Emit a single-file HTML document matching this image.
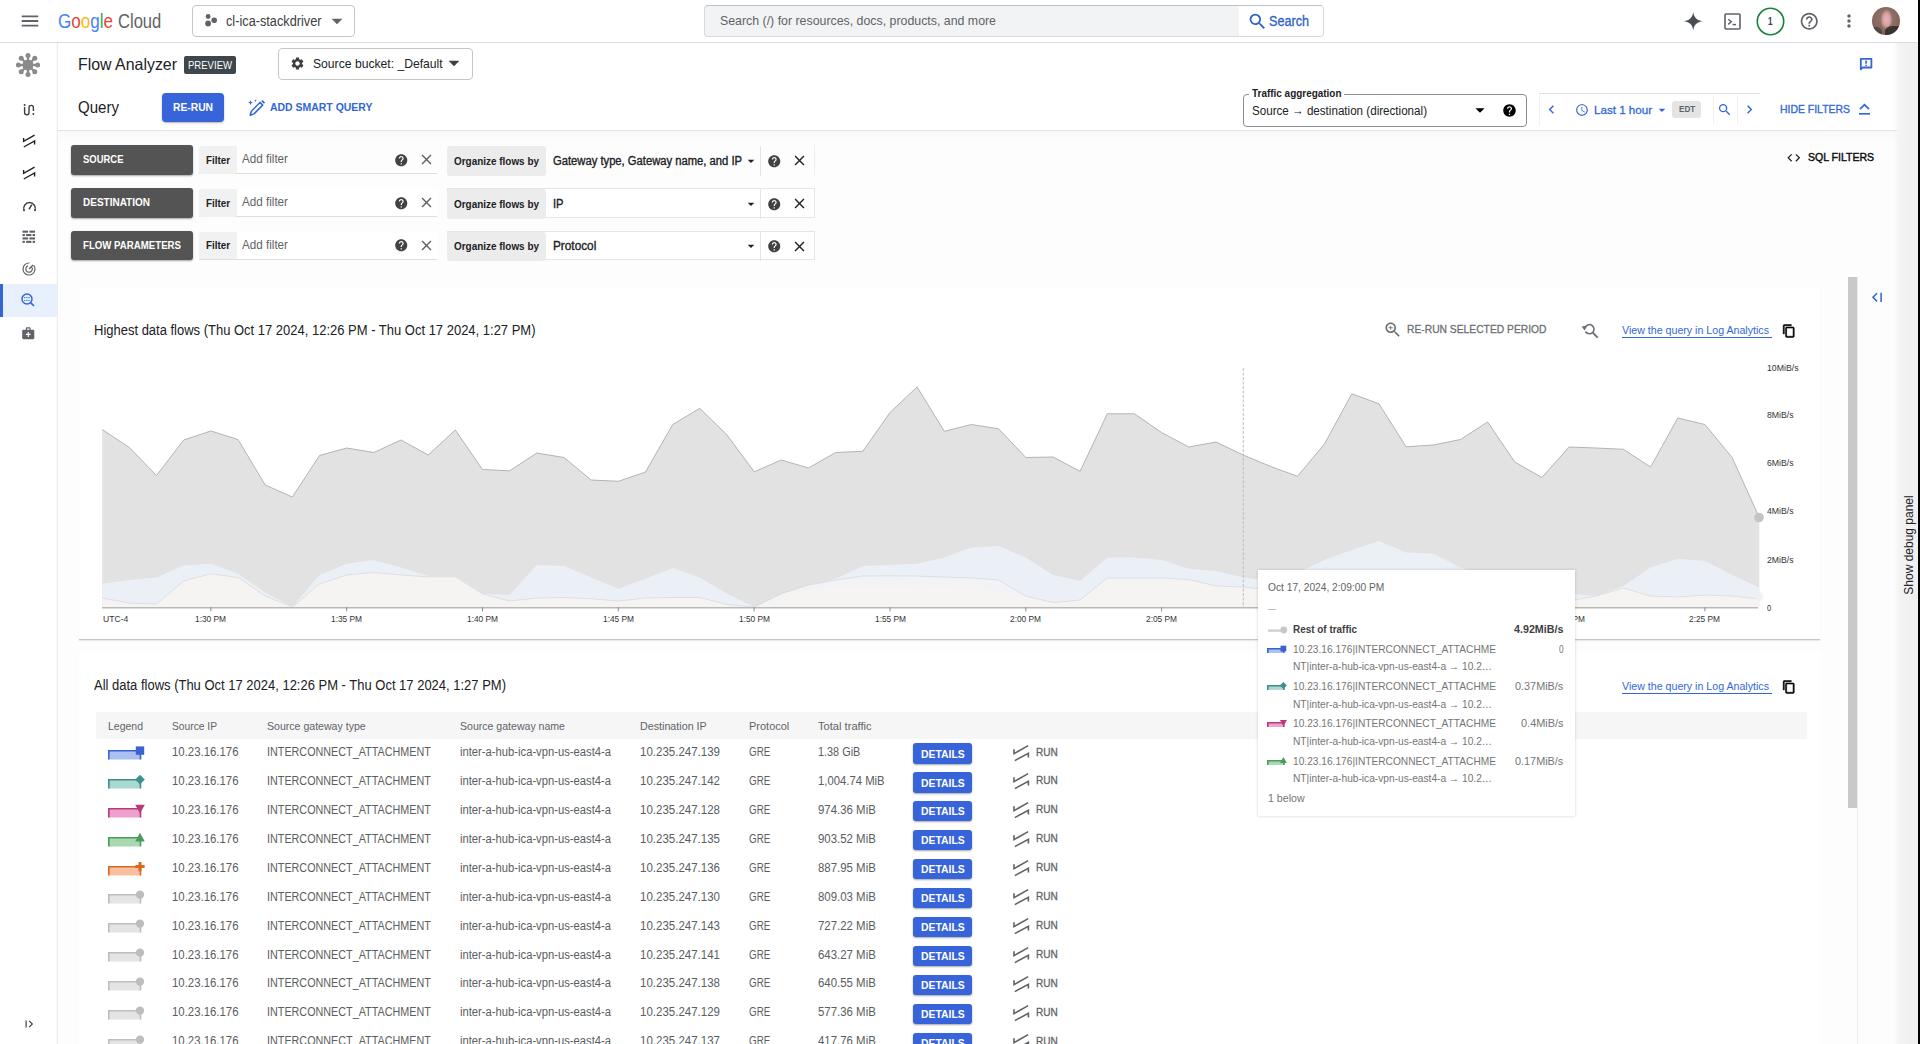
<!DOCTYPE html><html><head><meta charset="utf-8"><title>Flow Analyzer</title><style>
html,body{margin:0;padding:0;background:#fff;}body{width:1920px;height:1044px;overflow:hidden;position:relative;font-family:"Liberation Sans",sans-serif;}
#r div,#r svg,#r span{position:absolute;}#r{position:absolute;left:0;top:0;width:1920px;height:1044px;overflow:hidden;}
#r span.t{white-space:nowrap;transform-origin:0 50%;display:block;}#r span.t span{position:static;}
</style></head><body><div id="r">
<div style="left:0px;top:0px;width:1918px;height:42px;background:#fff;"></div>
<div style="left:0px;top:42px;width:1917px;height:1px;background:#dadce0;"></div>
<svg style="left:19.0px;top:10.0px;" width="22" height="22" viewBox="0 0 24 24"><path d="M3 18h18v-2H3v2zm0-5h18v-2H3v2zm0-7v2h18V6H3z" fill="#5f6368"/></svg>
<div style="left:192px;top:5px;width:162.5px;height:31.5px;border:1px solid #c4c7c5;border-radius:4px;box-sizing:border-box;background:#fff;"></div>
<svg style="left:203px;top:13px;" width="16" height="16" viewBox="0 0 16 16"><circle cx="5.1" cy="3.5" r="2.4" fill="#5f6368"/><circle cx="5.1" cy="10.5" r="2.9" fill="#5f6368"/><circle cx="11.2" cy="7.3" r="2.8" fill="#5f6368"/></svg>
<svg style="left:323.5px;top:7.8px;" width="26" height="26" viewBox="0 0 24 24"><path d="M7 10l5 5 5-5z" fill="#5f6368"/></svg>
<div style="left:704px;top:5px;width:620px;height:31.5px;border:1px solid #d5d8dc;border-top-color:#bfc2c6;border-radius:4px;box-sizing:border-box;background:#f1f3f4;"></div>
<div style="left:1239px;top:6px;width:84px;height:30px;background:#fff;border-radius:0 3px 3px 0;"></div>
<svg style="left:1246.5px;top:10.5px;" width="21" height="21" viewBox="0 0 24 24"><path d="M15.5 14h-.79l-.28-.27A6.471 6.471 0 0 0 16 9.5 6.5 6.5 0 1 0 9.5 16c1.61 0 3.09-.59 4.23-1.57l.27.28v.79l5 4.99L20.49 19l-4.99-5zm-6 0C7.01 14 5 11.99 5 9.5S7.01 5 9.5 5 14 7.01 14 9.5 11.99 14 9.5 14z" fill="#2b63c7"/></svg>
<svg style="left:1682.55px;top:10.95px;" width="20.5" height="20.5" viewBox="0 0 24 24"><path d="M12 1C12.6 7.6 16.4 11.4 23 12 16.4 12.6 12.6 16.4 12 23 11.4 16.4 7.6 12.6 1 12 7.6 11.4 11.4 7.6 12 1z" fill="#4a4d51"/></svg>
<svg style="left:1723.5px;top:12.7px;" width="17" height="17" viewBox="0 0 17 17"><rect x="1" y="1" width="15" height="15" rx="1" fill="none" stroke="#5f6368" stroke-width="1.6"/><path d="M4.2 6.2l3 2.6-3 2.6" fill="none" stroke="#5f6368" stroke-width="1.5"/><path d="M8.6 11.6h3.4" stroke="#5f6368" stroke-width="1.5"/></svg>
<svg style="left:1756px;top:6.5px;" width="29" height="29" viewBox="0 0 29 29"><circle cx="14.5" cy="14.5" r="13.2" fill="#fff" stroke="#188038" stroke-width="1.6"/></svg>
<svg style="left:1799.35px;top:10.75px;" width="20.5" height="20.5" viewBox="0 0 24 24"><path d="M11 18h2v-2h-2v2zm1-16C6.48 2 2 6.48 2 12s4.48 10 10 10 10-4.48 10-10S17.52 2 12 2zm0 18c-4.41 0-8-3.59-8-8s3.59-8 8-8 8 3.59 8 8-3.59 8-8 8zm0-14c-2.21 0-4 1.79-4 4h2c0-1.1.9-2 2-2s2 .9 2 2c0 2-3 1.75-3 5h2c0-2.25 3-2.5 3-5 0-2.21-1.79-4-4-4z" fill="#5f6368"/></svg>
<svg style="left:1838.8px;top:11.0px;" width="20" height="20" viewBox="0 0 24 24"><path d="M12 8c1.1 0 2-.9 2-2s-.9-2-2-2-2 .9-2 2 .9 2 2 2zm0 2c-1.1 0-2 .9-2 2s.9 2 2 2 2-.9 2-2-.9-2-2-2zm0 6c-1.1 0-2 .9-2 2s.9 2 2 2 2-.9 2-2-.9-2-2-2z" fill="#5f6368"/></svg>
<div style="left:1872px;top:6.7px;width:28px;height:28px;border-radius:50%;background:radial-gradient(ellipse 22% 38% at 52% 45%,#e6b4b4 0,#d9a3a2 55%,rgba(150,110,100,0) 100%),radial-gradient(circle at 50% 40%,#9a7a70 0,#86685f 55%,#6b5750 100%);overflow:hidden;"><div style="left:13px;top:19px;width:16px;height:10px;background:#2b2523;border-radius:50% 20% 0 0;opacity:.8"></div><div style="left:1px;top:20px;width:9px;height:9px;background:#3a302d;border-radius:0 60% 0 0;opacity:.6"></div></div>
<div style="left:0px;top:43px;width:57px;height:1001px;background:#fff;"></div>
<div style="left:56px;top:43px;width:4px;height:1001px;background:linear-gradient(90deg,#fff,#ececec 40%,#f6f6f6 70%,rgba(252,252,252,0));"></div>
<div style="left:0px;top:284px;width:57px;height:33px;background:#e8f0fe;"></div>
<div style="left:0px;top:284px;width:3px;height:33px;background:#3367d6;"></div>
<div style="left:58px;top:43px;width:1841px;height:87px;background:#fff;"></div>
<div style="left:58px;top:130px;width:1841px;height:914px;background:linear-gradient(#f9f9f9,#fdfdfd 14px,#fdfdfd);"></div>
<div style="left:58px;top:129.5px;width:1841px;height:1px;background:#e4e4e4;"></div>
<div style="left:1893px;top:43px;width:25px;height:1001px;background:linear-gradient(90deg,rgba(250,250,250,0),#f3f3f3 28%,#efefef);"></div>
<div style="left:1918px;top:0px;width:2px;height:1044px;background:#000;"></div>
<div style="left:1858.5px;top:537.5px;width:100px;height:14px;line-height:14px;font-size:12px;color:#202124;transform:rotate(-90deg);transform-origin:50% 50%;text-align:center;white-space:nowrap;"><span id="dbg" style="display:inline-block;position:static">Show debug panel</span></div>
<div style="left:184px;top:56px;width:52px;height:18px;background:#3e474d;border-radius:2px;"></div>
<div style="left:278px;top:48px;width:194.5px;height:31.5px;border:1px solid #c4c7c5;border-radius:4px;box-sizing:border-box;background:#fff;"></div>
<svg style="left:290.0px;top:55.7px;" width="15" height="15" viewBox="0 0 24 24"><path d="M19.14 12.94c.04-.3.06-.61.06-.94 0-.32-.02-.64-.07-.94l2.03-1.58a.49.49 0 0 0 .12-.61l-1.92-3.32a.488.488 0 0 0-.59-.22l-2.39.96c-.5-.38-1.03-.7-1.62-.94l-.36-2.54a.484.484 0 0 0-.48-.41h-3.84c-.24 0-.43.17-.47.41l-.36 2.54c-.59.24-1.13.57-1.62.94l-2.39-.96c-.22-.08-.47 0-.59.22L2.74 8.87c-.12.21-.08.47.12.61l2.03 1.58c-.05.3-.09.63-.09.94s.02.64.07.94l-2.03 1.58a.49.49 0 0 0-.12.61l1.92 3.32c.12.22.37.29.59.22l2.39-.96c.5.38 1.03.7 1.62.94l.36 2.54c.05.24.24.41.48.41h3.84c.24 0 .44-.17.47-.41l.36-2.54c.59-.24 1.13-.56 1.62-.94l2.39.96c.22.08.47 0 .59-.22l1.92-3.32c.12-.22.07-.47-.12-.61l-2.01-1.58zM12 15.6c-1.98 0-3.6-1.62-3.6-3.6s1.62-3.6 3.6-3.6 3.6 1.62 3.6 3.6-1.62 3.6-3.6 3.6z" fill="#3c4043"/></svg>
<svg style="left:441.0px;top:50.3px;" width="26" height="26" viewBox="0 0 24 24"><path d="M7 10l5 5 5-5z" fill="#3c4043"/></svg>
<svg style="left:1859px;top:57px;" width="14" height="14" viewBox="0 0 14 14"><path d="M1.8 1.9h10.6v8.6H3.6L1.8 12.4z" fill="none" stroke="#3367d6" stroke-width="1.8" stroke-linejoin="round"/><path d="M7.1 3.6v3.1M7.1 7.8v1.3" stroke="#3367d6" stroke-width="1.6"/></svg>
<div style="left:162px;top:93px;width:62px;height:29px;background:#3764d9;border-radius:4px;box-shadow:0 1px 2px rgba(0,0,0,.3);"></div>
<svg style="left:246px;top:97.5px;" width="20" height="20" viewBox="0 0 20 20"><path d="M4.2 17.2l1.2-4 8.6-8.8 2.7 2.7-8.7 8.8z" fill="none" stroke="#3367d6" stroke-width="1.5" stroke-linejoin="round"/><path d="M15.3 3.2l1.2-1.2 2.6 2.6-1.2 1.2z" fill="#3367d6"/><path d="M4.5 2l.7 1.9 1.9.7-1.9.7-.7 1.9-.7-1.9-1.9-.7 1.9-.7z" fill="#3367d6"/><path d="M9.5 1.2l.4 1 .9.4-.9.4-.4 1-.4-1-1-.4 1-.4z" fill="#3367d6"/></svg>
<div style="left:1243px;top:94px;width:284px;height:32.5px;border:1px solid #8a8d91;border-radius:4px;box-sizing:border-box;background:#fff;"></div>
<div style="left:1249px;top:91px;width:95px;height:6px;background:#fff;"></div>
<svg style="left:1468.5px;top:99.0px;" width="22" height="22" viewBox="0 0 24 24"><path d="M7 10l5 5 5-5z" fill="#000"/></svg>
<svg style="left:1502.0px;top:102.7px;" width="15" height="15" viewBox="0 0 24 24"><path d="M12 2C6.48 2 2 6.48 2 12s4.48 10 10 10 10-4.48 10-10S17.52 2 12 2zm1 17h-2v-2h2v2zm2.07-7.75l-.9.92C13.45 12.9 13 13.5 13 15h-2v-.5c0-1.1.45-2.1 1.17-2.83l1.24-1.26c.37-.36.59-.86.59-1.41 0-1.1-.9-2-2-2s-2 .9-2 2H8c0-2.21 1.79-4 4-4s4 1.79 4 4c0 .88-.36 1.68-.93 2.25z" fill="#000"/></svg>
<div style="left:1539px;top:93px;width:221px;height:32.5px;background:#fff;border-left:1px solid #f1f1f1;box-sizing:border-box;"></div>
<div style="left:1539px;top:93px;width:221px;height:1px;background:#e0e0e0;"></div>
<div style="left:1713px;top:96px;width:1px;height:28px;background:#f0f0f0;"></div>
<div style="left:1737px;top:96px;width:1px;height:28px;background:#f0f0f0;"></div>
<svg style="left:1542.5px;top:100.9px;" width="17" height="17" viewBox="0 0 24 24"><path d="M15.41 7.41L14 6l-6 6 6 6 1.41-1.41L10.83 12z" fill="#3367d6"/></svg>
<svg style="left:1575.0px;top:102.6px;" width="14" height="14" viewBox="0 0 24 24"><path d="M11.99 2C6.47 2 2 6.48 2 12s4.47 10 9.99 10C17.52 22 22 17.52 22 12S17.52 2 11.99 2zM12 20c-4.42 0-8-3.58-8-8s3.58-8 8-8 8 3.58 8 8-3.58 8-8 8zm.5-13H11v6l5.25 3.15.75-1.23-4.5-2.67z" fill="#3367d6"/></svg>
<svg style="left:1654.0px;top:102.0px;" width="16" height="16" viewBox="0 0 24 24"><path d="M7 10l5 5 5-5z" fill="#3367d6"/></svg>
<div style="left:1672.4px;top:101px;width:28.6px;height:17px;background:#e4e4e4;border-radius:3px;"></div>
<svg style="left:1717.05px;top:101.85px;" width="15.5" height="15.5" viewBox="0 0 24 24"><path d="M15.5 14h-.79l-.28-.27A6.471 6.471 0 0 0 16 9.5 6.5 6.5 0 1 0 9.5 16c1.61 0 3.09-.59 4.23-1.57l.27.28v.79l5 4.99L20.49 19l-4.99-5zm-6 0C7.01 14 5 11.99 5 9.5S7.01 5 9.5 5 14 7.01 14 9.5 11.99 14 9.5 14z" fill="#3367d6"/></svg>
<svg style="left:1740.5px;top:101.0px;" width="17" height="17" viewBox="0 0 24 24"><path d="M10 6L8.59 7.41 13.17 12l-4.58 4.59L10 18l6-6z" fill="#3367d6"/></svg>
<svg style="left:1858px;top:102px;" width="13" height="14" viewBox="0 0 13 14"><path d="M2 7.2L6.5 2.6 11 7.2" fill="none" stroke="#3367d6" stroke-width="1.7"/><path d="M1 11.8h11" stroke="#3367d6" stroke-width="1.7"/></svg>
<div style="left:71px;top:145px;width:121.5px;height:29.5px;background:#545454;border-radius:3px;box-shadow:0 1px 2px rgba(0,0,0,.35);"></div>
<div style="left:199px;top:146px;width:238px;height:28.0px;border-bottom:1px solid #dedede;box-sizing:border-box;"></div>
<div style="left:199px;top:146px;width:38px;height:27.5px;background:#f1f1f1;border-radius:2px;"></div>
<svg style="left:394.25px;top:152.5px;" width="14.5" height="14.5" viewBox="0 0 24 24"><path d="M12 2C6.48 2 2 6.48 2 12s4.48 10 10 10 10-4.48 10-10S17.52 2 12 2zm1 17h-2v-2h2v2zm2.07-7.75l-.9.92C13.45 12.9 13 13.5 13 15h-2v-.5c0-1.1.45-2.1 1.17-2.83l1.24-1.26c.37-.36.59-.86.59-1.41 0-1.1-.9-2-2-2s-2 .9-2 2H8c0-2.21 1.79-4 4-4s4 1.79 4 4c0 .88-.36 1.68-.93 2.25z" fill="#424242"/></svg>
<svg style="left:417.7px;top:151.25px;" width="17" height="17" viewBox="0 0 24 24"><path d="M19 6.41L17.59 5 12 10.59 6.41 5 5 6.41 10.59 12 5 17.59 6.41 19 12 13.41 17.59 19 19 17.59 13.41 12z" fill="#616161"/></svg>
<div style="left:447px;top:145.4px;width:368px;height:29.5px;border-right:1px solid #efefef;box-sizing:border-box;"></div>
<div style="left:447px;top:146px;width:98.5px;height:29.5px;background:#ececec;border-radius:3px;"></div>
<svg style="left:742.5px;top:152.75px;" width="16" height="16" viewBox="0 0 24 24"><path d="M7 10l5 5 5-5z" fill="#202124"/></svg>
<div style="left:760px;top:146px;width:1px;height:29.5px;background:#e4e4e4;"></div>
<svg style="left:767.45px;top:153.5px;" width="14.5" height="14.5" viewBox="0 0 24 24"><path d="M12 2C6.48 2 2 6.48 2 12s4.48 10 10 10 10-4.48 10-10S17.52 2 12 2zm1 17h-2v-2h2v2zm2.07-7.75l-.9.92C13.45 12.9 13 13.5 13 15h-2v-.5c0-1.1.45-2.1 1.17-2.83l1.24-1.26c.37-.36.59-.86.59-1.41 0-1.1-.9-2-2-2s-2 .9-2 2H8c0-2.21 1.79-4 4-4s4 1.79 4 4c0 .88-.36 1.68-.93 2.25z" fill="#424242"/></svg>
<svg style="left:791.3px;top:152.25px;" width="17" height="17" viewBox="0 0 24 24"><path d="M19 6.41L17.59 5 12 10.59 6.41 5 5 6.41 10.59 12 5 17.59 6.41 19 12 13.41 17.59 19 19 17.59 13.41 12z" fill="#202124"/></svg>
<div style="left:71px;top:188px;width:121.5px;height:29.5px;background:#545454;border-radius:3px;box-shadow:0 1px 2px rgba(0,0,0,.35);"></div>
<div style="left:199px;top:189px;width:238px;height:28.0px;background:#fff;border-bottom:1px solid #dedede;box-sizing:border-box;"></div>
<div style="left:199px;top:189px;width:38px;height:27.5px;background:#f1f1f1;border-radius:2px;"></div>
<svg style="left:394.25px;top:195.5px;" width="14.5" height="14.5" viewBox="0 0 24 24"><path d="M12 2C6.48 2 2 6.48 2 12s4.48 10 10 10 10-4.48 10-10S17.52 2 12 2zm1 17h-2v-2h2v2zm2.07-7.75l-.9.92C13.45 12.9 13 13.5 13 15h-2v-.5c0-1.1.45-2.1 1.17-2.83l1.24-1.26c.37-.36.59-.86.59-1.41 0-1.1-.9-2-2-2s-2 .9-2 2H8c0-2.21 1.79-4 4-4s4 1.79 4 4c0 .88-.36 1.68-.93 2.25z" fill="#424242"/></svg>
<svg style="left:417.7px;top:194.25px;" width="17" height="17" viewBox="0 0 24 24"><path d="M19 6.41L17.59 5 12 10.59 6.41 5 5 6.41 10.59 12 5 17.59 6.41 19 12 13.41 17.59 19 19 17.59 13.41 12z" fill="#616161"/></svg>
<div style="left:447px;top:188.4px;width:368px;height:29.5px;background:#fff;border:1px solid #e6e6e6;box-sizing:border-box;"></div>
<div style="left:447px;top:189px;width:98.5px;height:29.5px;background:#ececec;border-radius:3px;"></div>
<svg style="left:742.5px;top:195.75px;" width="16" height="16" viewBox="0 0 24 24"><path d="M7 10l5 5 5-5z" fill="#202124"/></svg>
<div style="left:760px;top:189px;width:1px;height:29.5px;background:#e4e4e4;"></div>
<svg style="left:767.45px;top:196.5px;" width="14.5" height="14.5" viewBox="0 0 24 24"><path d="M12 2C6.48 2 2 6.48 2 12s4.48 10 10 10 10-4.48 10-10S17.52 2 12 2zm1 17h-2v-2h2v2zm2.07-7.75l-.9.92C13.45 12.9 13 13.5 13 15h-2v-.5c0-1.1.45-2.1 1.17-2.83l1.24-1.26c.37-.36.59-.86.59-1.41 0-1.1-.9-2-2-2s-2 .9-2 2H8c0-2.21 1.79-4 4-4s4 1.79 4 4c0 .88-.36 1.68-.93 2.25z" fill="#424242"/></svg>
<svg style="left:791.3px;top:195.25px;" width="17" height="17" viewBox="0 0 24 24"><path d="M19 6.41L17.59 5 12 10.59 6.41 5 5 6.41 10.59 12 5 17.59 6.41 19 12 13.41 17.59 19 19 17.59 13.41 12z" fill="#202124"/></svg>
<div style="left:71px;top:230.5px;width:121.5px;height:29.5px;background:#545454;border-radius:3px;box-shadow:0 1px 2px rgba(0,0,0,.35);"></div>
<div style="left:199px;top:231.5px;width:238px;height:28.0px;background:#fff;border-bottom:1px solid #dedede;box-sizing:border-box;"></div>
<div style="left:199px;top:231.5px;width:38px;height:27.5px;background:#f1f1f1;border-radius:2px;"></div>
<svg style="left:394.25px;top:238.0px;" width="14.5" height="14.5" viewBox="0 0 24 24"><path d="M12 2C6.48 2 2 6.48 2 12s4.48 10 10 10 10-4.48 10-10S17.52 2 12 2zm1 17h-2v-2h2v2zm2.07-7.75l-.9.92C13.45 12.9 13 13.5 13 15h-2v-.5c0-1.1.45-2.1 1.17-2.83l1.24-1.26c.37-.36.59-.86.59-1.41 0-1.1-.9-2-2-2s-2 .9-2 2H8c0-2.21 1.79-4 4-4s4 1.79 4 4c0 .88-.36 1.68-.93 2.25z" fill="#424242"/></svg>
<svg style="left:417.7px;top:236.75px;" width="17" height="17" viewBox="0 0 24 24"><path d="M19 6.41L17.59 5 12 10.59 6.41 5 5 6.41 10.59 12 5 17.59 6.41 19 12 13.41 17.59 19 19 17.59 13.41 12z" fill="#616161"/></svg>
<div style="left:447px;top:230.9px;width:368px;height:29.5px;background:#fff;border:1px solid #e6e6e6;box-sizing:border-box;"></div>
<div style="left:447px;top:231.5px;width:98.5px;height:29.5px;background:#ececec;border-radius:3px;"></div>
<svg style="left:742.5px;top:238.25px;" width="16" height="16" viewBox="0 0 24 24"><path d="M7 10l5 5 5-5z" fill="#202124"/></svg>
<div style="left:760px;top:231.5px;width:1px;height:29.5px;background:#e4e4e4;"></div>
<svg style="left:767.45px;top:239.0px;" width="14.5" height="14.5" viewBox="0 0 24 24"><path d="M12 2C6.48 2 2 6.48 2 12s4.48 10 10 10 10-4.48 10-10S17.52 2 12 2zm1 17h-2v-2h2v2zm2.07-7.75l-.9.92C13.45 12.9 13 13.5 13 15h-2v-.5c0-1.1.45-2.1 1.17-2.83l1.24-1.26c.37-.36.59-.86.59-1.41 0-1.1-.9-2-2-2s-2 .9-2 2H8c0-2.21 1.79-4 4-4s4 1.79 4 4c0 .88-.36 1.68-.93 2.25z" fill="#424242"/></svg>
<svg style="left:791.3px;top:237.75px;" width="17" height="17" viewBox="0 0 24 24"><path d="M19 6.41L17.59 5 12 10.59 6.41 5 5 6.41 10.59 12 5 17.59 6.41 19 12 13.41 17.59 19 19 17.59 13.41 12z" fill="#202124"/></svg>
<svg style="left:1786.05px;top:150.05px;" width="15.5" height="15.5" viewBox="0 0 24 24"><path d="M9.4 16.6L4.8 12l4.6-4.6L8 6l-6 6 6 6 1.4-1.4zm5.2 0l4.6-4.6-4.6-4.6L16 6l6 6-6 6-1.4-1.4z" fill="#202124"/></svg>
<div style="left:1848px;top:277px;width:9px;height:531px;background:#c9c9c9;"></div>
<div style="left:1857px;top:277px;width:1px;height:767px;background:#ececec;"></div>
<svg style="left:1867.95px;top:288.25px;" width="18.5" height="18.5" viewBox="0 0 24 24"><path d="M12.41 16.59L7.82 12l4.59-4.59L11 6l-6 6 6 6zM16 6h2v12h-2z" fill="#3367d6"/></svg>
<svg style="left:21.5px;top:1016.5px;" width="14" height="14" viewBox="0 0 24 24"><path d="M6 6h2v12H6zM11.59 7.41L16.18 12l-4.59 4.59L13 18l6-6-6-6z" fill="#3c4043"/></svg>
<div style="left:79px;top:289px;width:1741px;height:350px;background:#fff;border-bottom:1px solid #c6c6c6;box-shadow:0 1px 1px rgba(0,0,0,.08);"></div>
<svg style="left:1382.55px;top:320.05px;" width="19.5" height="19.5" viewBox="0 0 24 24"><path d="M15.5 14h-.79l-.28-.27C15.41 12.59 16 11.11 16 9.5 16 5.91 13.09 3 9.5 3S3 5.91 3 9.5 5.91 16 9.5 16c1.61 0 3.09-.59 4.23-1.57l.27.28v.79l5 4.99L20.49 19l-4.99-5zm-6 0C7.01 14 5 11.99 5 9.5S7.01 5 9.5 5 14 7.01 14 9.5 11.99 14 9.5 14zM12 10h-2v2H9v-2H7V9h2V7h1v2h2v1z" fill="#6b6f73"/></svg>
<svg style="left:1580px;top:319.5px;" width="20" height="20" viewBox="0 0 20 20"><path d="M5.42 11.5A4.6 4.6 0 1 0 4.96 8" fill="none" stroke="#6b6f73" stroke-width="1.6"/><path d="M12.8 12.6l4.9 5" stroke="#6b6f73" stroke-width="1.9"/><path d="M1.6 6.4l5.6-.6-2.6 4.6z" fill="#6b6f73"/></svg>
<div style="left:1621.5px;top:337px;width:150px;height:1px;background:#3367d6;"></div>
<svg style="left:1782.2px;top:323.6px;" width="14" height="14" viewBox="0 0 24 24"><path d="M16 1H4c-1.1 0-2 .9-2 2v14h2V3h12V1zm3 4H8c-1.1 0-2 .9-2 2v14c0 1.1.9 2 2 2h11c1.1 0 2-.9 2-2V7c0-1.1-.9-2-2-2zm0 16H8V7h11v14z" fill="#000" stroke="#000" stroke-width="0.9"/></svg>
<svg style="left:80px;top:300px;" width="1740" height="339" viewBox="0 0 1740 339"><polygon points="22.2,307.3 22.2,129.5 49.4,147.5 76.5,175.5 103.7,140.0 130.9,131.0 158.0,139.5 185.2,185.0 212.4,197.0 239.5,155.5 266.7,148.0 293.8,152.5 321.0,140.0 348.2,155.0 375.3,130.0 402.5,169.5 429.7,170.8 456.8,153.0 484.0,157.5 511.2,180.0 538.3,181.3 565.5,172.0 592.7,124.5 619.8,108.3 647.0,135.0 674.2,171.8 701.3,160.0 728.5,168.0 755.7,152.5 782.8,151.3 810.0,112.5 837.1,87.0 864.3,131.3 891.5,124.5 918.6,128.8 945.8,157.5 973.0,157.0 1000.1,171.3 1027.3,113.8 1054.5,113.8 1081.6,132.5 1108.8,147.0 1136.0,142.0 1163.1,155.0 1190.3,166.3 1217.5,176.3 1244.6,143.8 1271.8,93.8 1299.0,103.8 1326.1,146.8 1353.3,145.0 1380.5,139.5 1407.6,122.0 1434.8,162.0 1461.9,177.5 1489.1,147.0 1516.3,148.0 1543.4,149.3 1570.6,167.0 1597.8,118.0 1624.9,124.5 1652.1,157.5 1679.3,217.5 1679.3,307.3" fill="#e2e2e2"/><polyline points="22.2,129.5 49.4,147.5 76.5,175.5 103.7,140.0 130.9,131.0 158.0,139.5 185.2,185.0 212.4,197.0 239.5,155.5 266.7,148.0 293.8,152.5 321.0,140.0 348.2,155.0 375.3,130.0 402.5,169.5 429.7,170.8 456.8,153.0 484.0,157.5 511.2,180.0 538.3,181.3 565.5,172.0 592.7,124.5 619.8,108.3 647.0,135.0 674.2,171.8 701.3,160.0 728.5,168.0 755.7,152.5 782.8,151.3 810.0,112.5 837.1,87.0 864.3,131.3 891.5,124.5 918.6,128.8 945.8,157.5 973.0,157.0 1000.1,171.3 1027.3,113.8 1054.5,113.8 1081.6,132.5 1108.8,147.0 1136.0,142.0 1163.1,155.0 1190.3,166.3 1217.5,176.3 1244.6,143.8 1271.8,93.8 1299.0,103.8 1326.1,146.8 1353.3,145.0 1380.5,139.5 1407.6,122.0 1434.8,162.0 1461.9,177.5 1489.1,147.0 1516.3,148.0 1543.4,149.3 1570.6,167.0 1597.8,118.0 1624.9,124.5 1652.1,157.5 1679.3,217.5" fill="none" stroke="#b4b4b4" stroke-width="1"/><polygon points="22.2,307.3 22.2,283.8 49.4,280.0 76.5,277.5 103.7,265.5 130.9,263.8 158.0,273.8 185.2,292.5 212.4,307.0 239.5,275.0 266.7,263.8 293.8,260.0 321.0,267.5 348.2,276.0 375.3,276.0 402.5,293.8 429.7,295.0 456.8,265.0 484.0,266.0 511.2,277.5 538.3,288.8 565.5,278.8 592.7,268.0 619.8,277.5 647.0,293.8 674.2,307.0 701.3,295.0 728.5,286.0 755.7,278.8 782.8,266.0 810.0,265.0 837.1,263.8 864.3,257.5 891.5,247.5 918.6,246.0 945.8,257.5 973.0,275.0 1000.1,281.0 1027.3,257.5 1054.5,257.5 1081.6,260.0 1108.8,268.8 1136.0,271.0 1163.1,277.5 1190.3,281.0 1217.5,272.5 1244.6,260.0 1271.8,250.0 1299.0,241.0 1326.1,252.5 1353.3,253.8 1380.5,267.5 1407.6,278.0 1434.8,288.0 1461.9,294.0 1489.1,293.8 1516.3,296.0 1543.4,286.0 1570.6,267.5 1597.8,258.8 1624.9,261.0 1652.1,275.0 1679.3,287.5 1679.3,307.3" fill="#ebf0f7"/><polygon points="22.2,307.3 22.2,298.0 49.4,303.0 76.5,304.0 103.7,281.0 130.9,273.8 158.0,277.5 185.2,296.0 212.4,307.0 239.5,283.8 266.7,275.0 293.8,272.5 321.0,275.0 348.2,276.8 375.3,276.8 402.5,293.8 429.7,301.0 456.8,298.0 484.0,297.5 511.2,298.8 538.3,301.0 565.5,298.0 592.7,297.5 619.8,297.5 647.0,304.5 674.2,307.0 701.3,293.8 728.5,285.0 755.7,280.0 782.8,276.0 810.0,275.8 837.1,276.0 864.3,277.0 891.5,278.0 918.6,280.0 945.8,296.0 973.0,302.5 1000.1,300.0 1027.3,278.0 1054.5,278.0 1081.6,278.0 1108.8,279.5 1136.0,286.0 1163.1,287.0 1190.3,290.0 1217.5,292.0 1244.6,292.0 1271.8,292.0 1299.0,292.0 1326.1,293.0 1353.3,294.0 1380.5,296.0 1407.6,298.0 1434.8,300.0 1461.9,301.0 1489.1,301.0 1516.3,296.0 1543.4,288.0 1570.6,296.0 1597.8,297.0 1624.9,295.0 1652.1,296.0 1679.3,299.0 1679.3,307.3" fill="#f1f3f6"/><polygon points="22.2,307.3 22.2,298.0 49.4,303.0 76.5,304.0 103.7,281.0 130.9,273.8 158.0,277.5 185.2,296.0 212.4,307.0 239.5,283.8 266.7,275.0 293.8,272.5 321.0,275.0 348.2,276.8 375.3,276.8 402.5,293.8 429.7,301.0 456.8,298.0 484.0,297.5 511.2,298.8 538.3,301.0 565.5,298.0 592.7,297.5 619.8,297.5 647.0,304.5 674.2,307.0 701.3,296.0 728.5,290.0 755.7,287.0 782.8,287.0 810.0,287.5 837.1,286.0 864.3,287.0 891.5,284.5 918.6,290.0 945.8,297.0 973.0,303.5 1000.1,301.5 1027.3,278.0 1054.5,278.0 1081.6,278.0 1108.8,279.5 1136.0,286.0 1163.1,287.0 1190.3,290.0 1217.5,292.0 1244.6,292.0 1271.8,292.0 1299.0,292.0 1326.1,293.0 1353.3,294.0 1380.5,296.0 1407.6,298.0 1434.8,300.0 1461.9,301.0 1489.1,301.0 1516.3,296.0 1543.4,288.0 1570.6,296.0 1597.8,297.0 1624.9,295.0 1652.1,296.0 1679.3,299.0 1679.3,307.3" fill="#f5f4f3"/><polyline points="22.2,298.0 49.4,303.0 76.5,304.0 103.7,281.0 130.9,273.8 158.0,277.5 185.2,296.0 212.4,307.0 239.5,283.8 266.7,275.0 293.8,272.5 321.0,275.0 348.2,276.8 375.3,276.8 402.5,293.8 429.7,301.0 456.8,298.0 484.0,297.5 511.2,298.8 538.3,301.0 565.5,298.0 592.7,297.5 619.8,297.5 647.0,304.5 674.2,307.0 701.3,293.8 728.5,285.0 755.7,280.0 782.8,276.0 810.0,275.8 837.1,276.0 864.3,277.0 891.5,278.0 918.6,280.0 945.8,296.0 973.0,302.5 1000.1,300.0 1027.3,278.0 1054.5,278.0 1081.6,278.0 1108.8,279.5 1136.0,286.0 1163.1,287.0 1190.3,290.0 1217.5,292.0 1244.6,292.0 1271.8,292.0 1299.0,292.0 1326.1,293.0 1353.3,294.0 1380.5,296.0 1407.6,298.0 1434.8,300.0 1461.9,301.0 1489.1,301.0 1516.3,296.0 1543.4,288.0 1570.6,296.0 1597.8,297.0 1624.9,295.0 1652.1,296.0 1679.3,299.0" fill="none" stroke="#d6d6da" stroke-width="0.7"/><path d="M22 307.69999999999993H1678" stroke="#b9b9b9" stroke-width="1.4"/><path d="M130.8 307.29999999999995v4" stroke="#8a8a8a" stroke-width="1"/><path d="M266.6 307.29999999999995v4" stroke="#8a8a8a" stroke-width="1"/><path d="M402.5 307.29999999999995v4" stroke="#8a8a8a" stroke-width="1"/><path d="M538.3 307.29999999999995v4" stroke="#8a8a8a" stroke-width="1"/><path d="M674.1 307.29999999999995v4" stroke="#8a8a8a" stroke-width="1"/><path d="M810.0 307.29999999999995v4" stroke="#8a8a8a" stroke-width="1"/><path d="M945.8 307.29999999999995v4" stroke="#8a8a8a" stroke-width="1"/><path d="M1081.6 307.29999999999995v4" stroke="#8a8a8a" stroke-width="1"/><path d="M1217.4 307.29999999999995v4" stroke="#8a8a8a" stroke-width="1"/><path d="M1353.3 307.29999999999995v4" stroke="#8a8a8a" stroke-width="1"/><path d="M1489.1 307.29999999999995v4" stroke="#8a8a8a" stroke-width="1"/><path d="M1624.9 307.29999999999995v4" stroke="#8a8a8a" stroke-width="1"/><path d="M1163.3 68V308" stroke="#bdbdbd" stroke-width="1" stroke-dasharray="3 1.5"/><circle cx="1679" cy="217.5" r="4.8" fill="#c4c4c4"/><circle cx="1679" cy="297" r="4.5" fill="#f0f0f0" opacity=".8"/></svg>
<div style="left:79px;top:652px;width:1741px;height:392px;background:#fff;"></div>
<div style="left:1621.5px;top:693.3px;width:150px;height:1px;background:#3367d6;"></div>
<svg style="left:1782.2px;top:679.6px;" width="14" height="14" viewBox="0 0 24 24"><path d="M16 1H4c-1.1 0-2 .9-2 2v14h2V3h12V1zm3 4H8c-1.1 0-2 .9-2 2v14c0 1.1.9 2 2 2h11c1.1 0 2-.9 2-2V7c0-1.1-.9-2-2-2zm0 16H8V7h11v14z" fill="#000" stroke="#000" stroke-width="0.9"/></svg>
<div style="left:96px;top:712px;width:1711px;height:27px;background:#f6f6f6;"></div>
<svg style="left:108px;top:745.8px;" width="38.5" height="14.5" viewBox="0 0 38.5 14.5"><path d="M0.8 13.5V4.8H32.5V13.5" fill="#a9c0f0" stroke="#3b63d0" stroke-width="1.6"/><rect x="27.8" y="0.39999999999999947" width="8.4" height="8.4" fill="#3b63d0"/></svg>
<div style="left:913.3px;top:743.2px;width:58.4px;height:20.4px;background:#3764d9;border-radius:3px;box-shadow:0 1px 2px rgba(0,0,0,.35);"></div>
<svg style="left:1012px;top:743.5px;" width="18" height="18" viewBox="0 0 18 18"><path d="M16.2 1.6L2 9.6V5.2" fill="none" stroke="#5f6368" stroke-width="1.6"/><path d="M2.8 16.6L16.4 9.4v4.2" fill="none" stroke="#5f6368" stroke-width="1.6"/></svg>
<svg style="left:108px;top:774.7px;" width="38.5" height="14.5" viewBox="0 0 38.5 14.5"><path d="M0.8 13.5V4.8H32.5V13.5" fill="#a8d8d0" stroke="#3f8f8a" stroke-width="1.6"/><path d="M32.0 -0.2000000000000005L36.800000000000004 4.6L32.0 9.4L27.2 4.6z" fill="#3f8f8a"/></svg>
<div style="left:913.3px;top:772.2px;width:58.4px;height:20.4px;background:#3764d9;border-radius:3px;box-shadow:0 1px 2px rgba(0,0,0,.35);"></div>
<svg style="left:1012px;top:772.4px;" width="18" height="18" viewBox="0 0 18 18"><path d="M16.2 1.6L2 9.6V5.2" fill="none" stroke="#5f6368" stroke-width="1.6"/><path d="M2.8 16.6L16.4 9.4v4.2" fill="none" stroke="#5f6368" stroke-width="1.6"/></svg>
<svg style="left:108px;top:803.7px;" width="38.5" height="14.5" viewBox="0 0 38.5 14.5"><path d="M0.8 13.5V4.8H32.5V13.5" fill="#f0a0cc" stroke="#b83a78" stroke-width="1.6"/><path d="M27.2 0.7999999999999995H36.800000000000004L32.0 9.4z" fill="#b83a78"/></svg>
<div style="left:913.3px;top:801.1px;width:58.4px;height:20.4px;background:#3764d9;border-radius:3px;box-shadow:0 1px 2px rgba(0,0,0,.35);"></div>
<svg style="left:1012px;top:801.4px;" width="18" height="18" viewBox="0 0 18 18"><path d="M16.2 1.6L2 9.6V5.2" fill="none" stroke="#5f6368" stroke-width="1.6"/><path d="M2.8 16.6L16.4 9.4v4.2" fill="none" stroke="#5f6368" stroke-width="1.6"/></svg>
<svg style="left:108px;top:832.6px;" width="38.5" height="14.5" viewBox="0 0 38.5 14.5"><path d="M0.8 13.5V4.8H32.5V13.5" fill="#a8d8b0" stroke="#4a9c5c" stroke-width="1.6"/><path d="M27.2 8.4H36.800000000000004L32.0 -0.2000000000000005z" fill="#4a9c5c"/></svg>
<div style="left:913.3px;top:830.1px;width:58.4px;height:20.4px;background:#3764d9;border-radius:3px;box-shadow:0 1px 2px rgba(0,0,0,.35);"></div>
<svg style="left:1012px;top:830.3px;" width="18" height="18" viewBox="0 0 18 18"><path d="M16.2 1.6L2 9.6V5.2" fill="none" stroke="#5f6368" stroke-width="1.6"/><path d="M2.8 16.6L16.4 9.4v4.2" fill="none" stroke="#5f6368" stroke-width="1.6"/></svg>
<svg style="left:108px;top:861.5px;" width="38.5" height="14.5" viewBox="0 0 38.5 14.5"><path d="M0.8 13.5V4.8H32.5V13.5" fill="#f8c0a0" stroke="#d86820" stroke-width="1.6"/><path d="M30.5 -5.551115123125783e-16h3v3.1h3.1v3h-3.1v3.1h-3v-3.1h-3.1v-3h3.1z" fill="#d86820"/></svg>
<div style="left:913.3px;top:859.0px;width:58.4px;height:20.4px;background:#3764d9;border-radius:3px;box-shadow:0 1px 2px rgba(0,0,0,.35);"></div>
<svg style="left:1012px;top:859.2px;" width="18" height="18" viewBox="0 0 18 18"><path d="M16.2 1.6L2 9.6V5.2" fill="none" stroke="#5f6368" stroke-width="1.6"/><path d="M2.8 16.6L16.4 9.4v4.2" fill="none" stroke="#5f6368" stroke-width="1.6"/></svg>
<svg style="left:108px;top:890.4px;" width="38.5" height="14.5" viewBox="0 0 38.5 14.5"><path d="M0.8 13.5V4.8H32.5V13.5" fill="#e4e4e4" stroke="#bdbdbd" stroke-width="1.6"/><circle cx="32.0" cy="4.6" r="4.2" fill="#bdbdbd"/></svg>
<div style="left:913.3px;top:888.0px;width:58.4px;height:20.4px;background:#3764d9;border-radius:3px;box-shadow:0 1px 2px rgba(0,0,0,.35);"></div>
<svg style="left:1012px;top:888.1px;" width="18" height="18" viewBox="0 0 18 18"><path d="M16.2 1.6L2 9.6V5.2" fill="none" stroke="#5f6368" stroke-width="1.6"/><path d="M2.8 16.6L16.4 9.4v4.2" fill="none" stroke="#5f6368" stroke-width="1.6"/></svg>
<svg style="left:108px;top:919.4px;" width="38.5" height="14.5" viewBox="0 0 38.5 14.5"><path d="M0.8 13.5V4.8H32.5V13.5" fill="#e4e4e4" stroke="#bdbdbd" stroke-width="1.6"/><circle cx="32.0" cy="4.6" r="4.2" fill="#bdbdbd"/></svg>
<div style="left:913.3px;top:916.9px;width:58.4px;height:20.4px;background:#3764d9;border-radius:3px;box-shadow:0 1px 2px rgba(0,0,0,.35);"></div>
<svg style="left:1012px;top:917.1px;" width="18" height="18" viewBox="0 0 18 18"><path d="M16.2 1.6L2 9.6V5.2" fill="none" stroke="#5f6368" stroke-width="1.6"/><path d="M2.8 16.6L16.4 9.4v4.2" fill="none" stroke="#5f6368" stroke-width="1.6"/></svg>
<svg style="left:108px;top:948.3px;" width="38.5" height="14.5" viewBox="0 0 38.5 14.5"><path d="M0.8 13.5V4.8H32.5V13.5" fill="#e4e4e4" stroke="#bdbdbd" stroke-width="1.6"/><circle cx="32.0" cy="4.6" r="4.2" fill="#bdbdbd"/></svg>
<div style="left:913.3px;top:945.9px;width:58.4px;height:20.4px;background:#3764d9;border-radius:3px;box-shadow:0 1px 2px rgba(0,0,0,.35);"></div>
<svg style="left:1012px;top:946.0px;" width="18" height="18" viewBox="0 0 18 18"><path d="M16.2 1.6L2 9.6V5.2" fill="none" stroke="#5f6368" stroke-width="1.6"/><path d="M2.8 16.6L16.4 9.4v4.2" fill="none" stroke="#5f6368" stroke-width="1.6"/></svg>
<svg style="left:108px;top:977.2px;" width="38.5" height="14.5" viewBox="0 0 38.5 14.5"><path d="M0.8 13.5V4.8H32.5V13.5" fill="#e4e4e4" stroke="#bdbdbd" stroke-width="1.6"/><circle cx="32.0" cy="4.6" r="4.2" fill="#bdbdbd"/></svg>
<div style="left:913.3px;top:974.8px;width:58.4px;height:20.4px;background:#3764d9;border-radius:3px;box-shadow:0 1px 2px rgba(0,0,0,.35);"></div>
<svg style="left:1012px;top:974.9px;" width="18" height="18" viewBox="0 0 18 18"><path d="M16.2 1.6L2 9.6V5.2" fill="none" stroke="#5f6368" stroke-width="1.6"/><path d="M2.8 16.6L16.4 9.4v4.2" fill="none" stroke="#5f6368" stroke-width="1.6"/></svg>
<svg style="left:108px;top:1006.2px;" width="38.5" height="14.5" viewBox="0 0 38.5 14.5"><path d="M0.8 13.5V4.8H32.5V13.5" fill="#e4e4e4" stroke="#bdbdbd" stroke-width="1.6"/><circle cx="32.0" cy="4.6" r="4.2" fill="#bdbdbd"/></svg>
<div style="left:913.3px;top:1003.8px;width:58.4px;height:20.4px;background:#3764d9;border-radius:3px;box-shadow:0 1px 2px rgba(0,0,0,.35);"></div>
<svg style="left:1012px;top:1003.9px;" width="18" height="18" viewBox="0 0 18 18"><path d="M16.2 1.6L2 9.6V5.2" fill="none" stroke="#5f6368" stroke-width="1.6"/><path d="M2.8 16.6L16.4 9.4v4.2" fill="none" stroke="#5f6368" stroke-width="1.6"/></svg>
<svg style="left:108px;top:1035.1px;" width="38.5" height="14.5" viewBox="0 0 38.5 14.5"><path d="M0.8 13.5V4.8H32.5V13.5" fill="#e4e4e4" stroke="#bdbdbd" stroke-width="1.6"/><circle cx="32.0" cy="4.6" r="4.2" fill="#bdbdbd"/></svg>
<div style="left:913.3px;top:1032.7px;width:58.4px;height:20.4px;background:#3764d9;border-radius:3px;box-shadow:0 1px 2px rgba(0,0,0,.35);"></div>
<svg style="left:1012px;top:1032.8px;" width="18" height="18" viewBox="0 0 18 18"><path d="M16.2 1.6L2 9.6V5.2" fill="none" stroke="#5f6368" stroke-width="1.6"/><path d="M2.8 16.6L16.4 9.4v4.2" fill="none" stroke="#5f6368" stroke-width="1.6"/></svg>
<svg style="left:14.3px;top:50.5px;" width="28" height="28" viewBox="0 0 28 28"><circle cx="14" cy="14" r="5.6" fill="#8a8a8a"/><path d="M14 14L23.6 14.0" stroke="#8a8a8a" stroke-width="2.2"/><circle cx="23.6" cy="14.0" r="2.5" fill="#8a8a8a"/><path d="M14 14L20.8 20.8" stroke="#8a8a8a" stroke-width="2.2"/><circle cx="20.8" cy="20.8" r="2.5" fill="#8a8a8a"/><path d="M14 14L14.0 23.6" stroke="#8a8a8a" stroke-width="2.2"/><circle cx="14.0" cy="23.6" r="2.5" fill="#8a8a8a"/><path d="M14 14L7.2 20.8" stroke="#8a8a8a" stroke-width="2.2"/><circle cx="7.2" cy="20.8" r="2.5" fill="#8a8a8a"/><path d="M14 14L4.4 14.0" stroke="#8a8a8a" stroke-width="2.2"/><circle cx="4.4" cy="14.0" r="2.5" fill="#8a8a8a"/><path d="M14 14L7.2 7.2" stroke="#8a8a8a" stroke-width="2.2"/><circle cx="7.2" cy="7.2" r="2.5" fill="#8a8a8a"/><path d="M14 14L14.0 4.4" stroke="#8a8a8a" stroke-width="2.2"/><circle cx="14.0" cy="4.4" r="2.5" fill="#8a8a8a"/><path d="M14 14L20.8 7.2" stroke="#8a8a8a" stroke-width="2.2"/><circle cx="20.8" cy="7.2" r="2.5" fill="#8a8a8a"/></svg>
<svg style="left:21.5px;top:103px;" width="14" height="14" viewBox="0 0 14 14"><path d="M2.6 4v5.6a2.2 2.2 0 0 0 4.4 0V4.6a2.2 2.2 0 0 1 4.4 0V8" fill="none" stroke="#3c4043" stroke-width="1.4"/><circle cx="2.6" cy="2" r="1" fill="#3c4043"/><circle cx="11.4" cy="11" r="1" fill="#3c4043"/></svg>
<svg style="left:21.6px;top:133.6px;" width="14" height="14" viewBox="0 0 14 14"><path d="M12.6 1.2L1.6 7.4V4" fill="none" stroke="#202124" stroke-width="1.4"/><path d="M1.8 13L12.6 7v3.4" fill="none" stroke="#202124" stroke-width="1.4"/></svg>
<svg style="left:21.6px;top:165.8px;" width="14" height="14" viewBox="0 0 14 14"><path d="M12.6 1.2L1.6 7.4V4" fill="none" stroke="#202124" stroke-width="1.4"/><path d="M1.8 13L12.6 7v3.4" fill="none" stroke="#202124" stroke-width="1.4"/></svg>
<svg style="left:21.5px;top:199.5px;" width="15" height="12" viewBox="0 0 15 12"><path d="M2 10.2A5.8 5.8 0 1 1 13 10.2" fill="none" stroke="#3c4043" stroke-width="1.4"/><path d="M7 9.4L9.8 4.6" stroke="#3c4043" stroke-width="1.5"/><circle cx="2" cy="10.2" r="1" fill="#3c4043"/><circle cx="13" cy="10.2" r="1" fill="#3c4043"/></svg>
<svg style="left:21.8px;top:229.8px;" width="13.5" height="13.5" viewBox="0 0 13.5 13.5"><rect x="0.5" y="0.6" width="5.6" height="2.1" fill="#5f6368"/><rect x="7.4" y="0.6" width="5.6" height="2.1" fill="#5f6368"/><rect x="0.5" y="4.0" width="2.4" height="2.1" fill="#5f6368"/><rect x="4.1" y="4.0" width="5.3" height="2.1" fill="#5f6368"/><rect x="10.6" y="4.0" width="2.4" height="2.1" fill="#5f6368"/><rect x="0.5" y="7.3999999999999995" width="5.6" height="2.1" fill="#5f6368"/><rect x="7.4" y="7.3999999999999995" width="5.6" height="2.1" fill="#5f6368"/><rect x="0.5" y="10.799999999999999" width="2.4" height="2.1" fill="#5f6368"/><rect x="4.1" y="10.799999999999999" width="5.3" height="2.1" fill="#5f6368"/><rect x="10.6" y="10.799999999999999" width="2.4" height="2.1" fill="#5f6368"/></svg>
<svg style="left:21.7px;top:261.7px;" width="14" height="14" viewBox="0 0 14 14"><circle cx="7" cy="7" r="6" fill="none" stroke="#5f6368" stroke-width="1.2" stroke-dasharray="32 5.7" transform="rotate(-40 7 7)"/><circle cx="7" cy="7" r="3.2" fill="none" stroke="#5f6368" stroke-width="1.2" stroke-dasharray="16 4.1" transform="rotate(-40 7 7)"/><path d="M7 7l4-4" stroke="#5f6368" stroke-width="1.3"/></svg>
<svg style="left:21.3px;top:293.3px;" width="14" height="14" viewBox="0 0 14 14"><circle cx="6" cy="6" r="5" fill="none" stroke="#3367d6" stroke-width="1.5"/><path d="M9.6 9.6l3.4 3.4" stroke="#3367d6" stroke-width="1.7"/><path d="M3 4.6h6M3 7.4h6" stroke="#3367d6" stroke-width="0.9" stroke-dasharray="1.4 0.8"/></svg>
<svg style="left:21.35px;top:325.55px;" width="14.5" height="14.5" viewBox="0 0 24 24"><path d="M20 6h-4V4c0-1.1-.9-2-2-2h-4c-1.1 0-2 .9-2 2v2H4c-1.1 0-2 .9-2 2v12c0 1.1.9 2 2 2h16c1.1 0 2-.9 2-2V8c0-1.1-.9-2-2-2zM10 4h4v2h-4V4zm6 11h-3v3h-2v-3H8v-2h3v-3h2v3h3v2z" fill="#5f6368"/></svg>
<span class="t" style="left:226.3px;top:12.2px;font-size:14px;line-height:18px;color:#3c4043;transform:scaleX(0.9094);">cl-ica-stackdriver</span>
<span class="t" style="left:720.3px;top:12.2px;font-size:13.5px;line-height:18px;color:#5f6368;transform:scaleX(0.9150);">Search (/) for resources, docs, products, and more</span>
<span class="t" style="left:1269.0px;top:12.2px;font-size:14px;line-height:18px;color:#2b63c7;transform:scaleX(0.9017);-webkit-text-stroke:0.3px #2b63c7;">Search</span>
<span class="t" style="left:1768.4px;top:14.2px;font-size:10.5px;line-height:14px;font-weight:700;color:#3c4043;transform:scaleX(0.7701);">1</span>
<span class="t" style="left:78.0px;top:54.1px;font-size:16.5px;line-height:21px;color:#202124;transform:scaleX(0.9638);">Flow Analyzer</span>
<span class="t" style="left:188.3px;top:58.2px;font-size:11px;line-height:14px;color:#fff;transform:scaleX(0.8673);">PREVIEW</span>
<span class="t" style="left:313.3px;top:55.0px;font-size:13.5px;line-height:18px;color:#202124;transform:scaleX(0.9001);">Source bucket: _Default</span>
<span class="t" style="left:78.0px;top:97.1px;font-size:16.5px;line-height:21px;color:#202124;transform:scaleX(0.9124);">Query</span>
<span class="t" style="left:173.0px;top:99.7px;font-size:11.5px;line-height:15px;font-weight:700;color:#fff;transform:scaleX(0.8942);">RE-RUN</span>
<span class="t" style="left:269.5px;top:99.7px;font-size:11.5px;line-height:15px;font-weight:700;color:#3367d6;transform:scaleX(0.9097);">ADD SMART QUERY</span>
<span class="t" style="left:1252.0px;top:86.4px;font-size:11px;line-height:14px;font-weight:700;color:#202124;transform:scaleX(0.9038);">Traffic aggregation</span>
<span class="t" style="left:1252.0px;top:102.5px;font-size:12.5px;line-height:16px;color:#202124;transform:scaleX(0.9294);">Source → destination (directional)</span>
<span class="t" style="left:1594.0px;top:102.0px;font-size:11.7px;line-height:15px;color:#3367d6;transform:scaleX(0.9917);-webkit-text-stroke:0.3px #3367d6;">Last 1 hour</span>
<span class="t" style="left:1678.5px;top:103.1px;font-size:9.5px;line-height:12px;font-weight:700;color:#5f6368;transform:scaleX(0.8526);">EDT</span>
<span class="t" style="left:1780.0px;top:101.9px;font-size:11.4px;line-height:15px;color:#3367d6;transform:scaleX(0.9165);-webkit-text-stroke:0.35px #3367d6;">HIDE FILTERS</span>
<span class="t" style="left:82.5px;top:152.4px;font-size:11px;line-height:14px;font-weight:700;color:#fff;transform:scaleX(0.8606);">SOURCE</span>
<span class="t" style="left:205.5px;top:152.8px;font-size:11px;line-height:14px;font-weight:700;color:#202124;transform:scaleX(0.8920);">Filter</span>
<span class="t" style="left:241.5px;top:151.2px;font-size:12.5px;line-height:16px;color:#5f6368;transform:scaleX(0.9322);">Add filter</span>
<span class="t" style="left:454.0px;top:153.8px;font-size:11px;line-height:14px;font-weight:700;color:#202124;transform:scaleX(0.9029);">Organize flows by</span>
<span class="t" style="left:553.3px;top:152.9px;font-size:12px;line-height:16px;color:#202124;transform:scaleX(0.9351);-webkit-text-stroke:0.35px #202124;">Gateway type, Gateway name, and IP</span>
<span class="t" style="left:82.5px;top:195.4px;font-size:11px;line-height:14px;font-weight:700;color:#fff;transform:scaleX(0.9085);">DESTINATION</span>
<span class="t" style="left:205.5px;top:195.8px;font-size:11px;line-height:14px;font-weight:700;color:#202124;transform:scaleX(0.8920);">Filter</span>
<span class="t" style="left:241.5px;top:194.2px;font-size:12.5px;line-height:16px;color:#5f6368;transform:scaleX(0.9322);">Add filter</span>
<span class="t" style="left:454.0px;top:196.8px;font-size:11px;line-height:14px;font-weight:700;color:#202124;transform:scaleX(0.9029);">Organize flows by</span>
<span class="t" style="left:553.3px;top:195.9px;font-size:12px;line-height:16px;color:#202124;transform:scaleX(0.9256);-webkit-text-stroke:0.35px #202124;">IP</span>
<span class="t" style="left:82.5px;top:237.9px;font-size:11px;line-height:14px;font-weight:700;color:#fff;transform:scaleX(0.8779);">FLOW PARAMETERS</span>
<span class="t" style="left:205.5px;top:238.2px;font-size:11px;line-height:14px;font-weight:700;color:#202124;transform:scaleX(0.8920);">Filter</span>
<span class="t" style="left:241.5px;top:236.8px;font-size:12.5px;line-height:16px;color:#5f6368;transform:scaleX(0.9322);">Add filter</span>
<span class="t" style="left:454.0px;top:239.2px;font-size:11px;line-height:14px;font-weight:700;color:#202124;transform:scaleX(0.9029);">Organize flows by</span>
<span class="t" style="left:553.3px;top:238.4px;font-size:12px;line-height:16px;color:#202124;transform:scaleX(0.9834);-webkit-text-stroke:0.35px #202124;">Protocol</span>
<span class="t" style="left:1808.4px;top:150.1px;font-size:11.3px;line-height:15px;color:#111;transform:scaleX(0.9304);-webkit-text-stroke:0.45px #111;">SQL FILTERS</span>
<span class="t" style="left:93.5px;top:320.6px;font-size:14px;line-height:18px;color:#202124;transform:scaleX(0.9275);">Highest data flows (Thu Oct 17 2024, 12:26 PM - Thu Oct 17 2024, 1:27 PM)</span>
<span class="t" style="left:1406.5px;top:322.1px;font-size:11.5px;line-height:15px;color:#6b6f73;transform:scaleX(0.8947);-webkit-text-stroke:0.3px #6b6f73;">RE-RUN SELECTED PERIOD</span>
<span class="t" style="left:1621.5px;top:322.5px;font-size:11.5px;line-height:15px;color:#3367d6;transform:scaleX(0.9247);">View the query in Log Analytics</span>
<span class="t" style="left:1766.5px;top:361.5px;font-size:9px;line-height:12px;color:#333;transform:scaleX(0.9688);">10MiB/s</span>
<span class="t" style="left:1766.5px;top:409.0px;font-size:9px;line-height:12px;color:#333;transform:scaleX(0.9631);">8MiB/s</span>
<span class="t" style="left:1766.5px;top:457.0px;font-size:9px;line-height:12px;color:#333;transform:scaleX(0.9631);">6MiB/s</span>
<span class="t" style="left:1766.5px;top:505.0px;font-size:9px;line-height:12px;color:#333;transform:scaleX(0.9631);">4MiB/s</span>
<span class="t" style="left:1766.5px;top:553.5px;font-size:9px;line-height:12px;color:#333;transform:scaleX(0.9631);">2MiB/s</span>
<span class="t" style="left:1766.5px;top:601.5px;font-size:9px;line-height:12px;color:#333;transform:scaleX(0.8374);">0</span>
<span class="t" style="left:102.5px;top:612.8px;font-size:9px;line-height:12px;color:#333;transform:scaleX(0.9547);">UTC-4</span>
<span class="t" style="left:195.3px;top:612.8px;font-size:9px;line-height:12px;color:#333;transform:scaleX(0.9245);">1:30 PM</span>
<span class="t" style="left:331.1px;top:612.8px;font-size:9px;line-height:12px;color:#333;transform:scaleX(0.9245);">1:35 PM</span>
<span class="t" style="left:467.0px;top:612.8px;font-size:9px;line-height:12px;color:#333;transform:scaleX(0.9245);">1:40 PM</span>
<span class="t" style="left:602.8px;top:612.8px;font-size:9px;line-height:12px;color:#333;transform:scaleX(0.9245);">1:45 PM</span>
<span class="t" style="left:738.6px;top:612.8px;font-size:9px;line-height:12px;color:#333;transform:scaleX(0.9245);">1:50 PM</span>
<span class="t" style="left:874.5px;top:612.8px;font-size:9px;line-height:12px;color:#333;transform:scaleX(0.9245);">1:55 PM</span>
<span class="t" style="left:1010.3px;top:612.8px;font-size:9px;line-height:12px;color:#333;transform:scaleX(0.9245);">2:00 PM</span>
<span class="t" style="left:1146.1px;top:612.8px;font-size:9px;line-height:12px;color:#333;transform:scaleX(0.9245);">2:05 PM</span>
<span class="t" style="left:1553.6px;top:612.8px;font-size:9px;line-height:12px;color:#333;transform:scaleX(0.9245);">2:20 PM</span>
<span class="t" style="left:1689.4px;top:612.8px;font-size:9px;line-height:12px;color:#333;transform:scaleX(0.9245);">2:25 PM</span>
<span class="t" style="left:93.5px;top:675.9px;font-size:14px;line-height:18px;color:#202124;transform:scaleX(0.9277);">All data flows (Thu Oct 17 2024, 12:26 PM - Thu Oct 17 2024, 1:27 PM)</span>
<span class="t" style="left:1621.5px;top:678.8px;font-size:11.5px;line-height:15px;color:#3367d6;transform:scaleX(0.9247);">View the query in Log Analytics</span>
<span class="t" style="left:107.5px;top:718.8px;font-size:11.5px;line-height:15px;color:#5f6368;transform:scaleX(0.9121);">Legend</span>
<span class="t" style="left:171.5px;top:718.8px;font-size:11.5px;line-height:15px;color:#5f6368;transform:scaleX(0.8911);">Source IP</span>
<span class="t" style="left:267.3px;top:718.8px;font-size:11.5px;line-height:15px;color:#5f6368;transform:scaleX(0.9189);">Source gateway type</span>
<span class="t" style="left:460.3px;top:718.8px;font-size:11.5px;line-height:15px;color:#5f6368;transform:scaleX(0.9175);">Source gateway name</span>
<span class="t" style="left:640.0px;top:718.8px;font-size:11.5px;line-height:15px;color:#5f6368;transform:scaleX(0.9314);">Destination IP</span>
<span class="t" style="left:748.7px;top:718.8px;font-size:11.5px;line-height:15px;color:#5f6368;transform:scaleX(0.9553);">Protocol</span>
<span class="t" style="left:817.7px;top:718.8px;font-size:11.5px;line-height:15px;color:#5f6368;transform:scaleX(0.9674);">Total traffic</span>
<span class="t" style="left:171.5px;top:744.0px;font-size:12.3px;line-height:16px;color:#5a5d61;transform:scaleX(0.9260);">10.23.16.176</span>
<span class="t" style="left:267.3px;top:744.0px;font-size:12.3px;line-height:16px;color:#5a5d61;transform:scaleX(0.8772);">INTERCONNECT_ATTACHMENT</span>
<span class="t" style="left:460.2px;top:744.0px;font-size:12.3px;line-height:16px;color:#5a5d61;transform:scaleX(0.9129);">inter-a-hub-ica-vpn-us-east4-a</span>
<span class="t" style="left:640.0px;top:744.0px;font-size:12.3px;line-height:16px;color:#5a5d61;transform:scaleX(0.9358);">10.235.247.139</span>
<span class="t" style="left:748.7px;top:744.0px;font-size:12.3px;line-height:16px;color:#5a5d61;transform:scaleX(0.7991);">GRE</span>
<span class="t" style="left:817.7px;top:744.0px;font-size:12.3px;line-height:16px;color:#5a5d61;transform:scaleX(0.8838);">1.38 GiB</span>
<span class="t" style="left:920.5px;top:746.5px;font-size:11px;line-height:14px;font-weight:700;color:#fff;transform:scaleX(0.9449);">DETAILS</span>
<span class="t" style="left:1035.5px;top:744.5px;font-size:11.5px;line-height:15px;color:#5f6368;transform:scaleX(0.8747);-webkit-text-stroke:0.3px #5f6368;">RUN</span>
<span class="t" style="left:171.5px;top:772.9px;font-size:12.3px;line-height:16px;color:#5a5d61;transform:scaleX(0.9260);">10.23.16.176</span>
<span class="t" style="left:267.3px;top:772.9px;font-size:12.3px;line-height:16px;color:#5a5d61;transform:scaleX(0.8772);">INTERCONNECT_ATTACHMENT</span>
<span class="t" style="left:460.2px;top:772.9px;font-size:12.3px;line-height:16px;color:#5a5d61;transform:scaleX(0.9129);">inter-a-hub-ica-vpn-us-east4-a</span>
<span class="t" style="left:640.0px;top:772.9px;font-size:12.3px;line-height:16px;color:#5a5d61;transform:scaleX(0.9358);">10.235.247.142</span>
<span class="t" style="left:748.7px;top:772.9px;font-size:12.3px;line-height:16px;color:#5a5d61;transform:scaleX(0.7991);">GRE</span>
<span class="t" style="left:817.7px;top:772.9px;font-size:12.3px;line-height:16px;color:#5a5d61;transform:scaleX(0.9190);">1,004.74 MiB</span>
<span class="t" style="left:920.5px;top:775.5px;font-size:11px;line-height:14px;font-weight:700;color:#fff;transform:scaleX(0.9449);">DETAILS</span>
<span class="t" style="left:1035.5px;top:773.4px;font-size:11.5px;line-height:15px;color:#5f6368;transform:scaleX(0.8747);-webkit-text-stroke:0.3px #5f6368;">RUN</span>
<span class="t" style="left:171.5px;top:801.9px;font-size:12.3px;line-height:16px;color:#5a5d61;transform:scaleX(0.9260);">10.23.16.176</span>
<span class="t" style="left:267.3px;top:801.9px;font-size:12.3px;line-height:16px;color:#5a5d61;transform:scaleX(0.8772);">INTERCONNECT_ATTACHMENT</span>
<span class="t" style="left:460.2px;top:801.9px;font-size:12.3px;line-height:16px;color:#5a5d61;transform:scaleX(0.9129);">inter-a-hub-ica-vpn-us-east4-a</span>
<span class="t" style="left:640.0px;top:801.9px;font-size:12.3px;line-height:16px;color:#5a5d61;transform:scaleX(0.9358);">10.235.247.128</span>
<span class="t" style="left:748.7px;top:801.9px;font-size:12.3px;line-height:16px;color:#5a5d61;transform:scaleX(0.7991);">GRE</span>
<span class="t" style="left:817.7px;top:801.9px;font-size:12.3px;line-height:16px;color:#5a5d61;transform:scaleX(0.9290);">974.36 MiB</span>
<span class="t" style="left:920.5px;top:804.4px;font-size:11px;line-height:14px;font-weight:700;color:#fff;transform:scaleX(0.9449);">DETAILS</span>
<span class="t" style="left:1035.5px;top:802.4px;font-size:11.5px;line-height:15px;color:#5f6368;transform:scaleX(0.8747);-webkit-text-stroke:0.3px #5f6368;">RUN</span>
<span class="t" style="left:171.5px;top:830.8px;font-size:12.3px;line-height:16px;color:#5a5d61;transform:scaleX(0.9260);">10.23.16.176</span>
<span class="t" style="left:267.3px;top:830.8px;font-size:12.3px;line-height:16px;color:#5a5d61;transform:scaleX(0.8772);">INTERCONNECT_ATTACHMENT</span>
<span class="t" style="left:460.2px;top:830.8px;font-size:12.3px;line-height:16px;color:#5a5d61;transform:scaleX(0.9129);">inter-a-hub-ica-vpn-us-east4-a</span>
<span class="t" style="left:640.0px;top:830.8px;font-size:12.3px;line-height:16px;color:#5a5d61;transform:scaleX(0.9358);">10.235.247.135</span>
<span class="t" style="left:748.7px;top:830.8px;font-size:12.3px;line-height:16px;color:#5a5d61;transform:scaleX(0.7991);">GRE</span>
<span class="t" style="left:817.7px;top:830.8px;font-size:12.3px;line-height:16px;color:#5a5d61;transform:scaleX(0.9290);">903.52 MiB</span>
<span class="t" style="left:920.5px;top:833.4px;font-size:11px;line-height:14px;font-weight:700;color:#fff;transform:scaleX(0.9449);">DETAILS</span>
<span class="t" style="left:1035.5px;top:831.3px;font-size:11.5px;line-height:15px;color:#5f6368;transform:scaleX(0.8747);-webkit-text-stroke:0.3px #5f6368;">RUN</span>
<span class="t" style="left:171.5px;top:859.7px;font-size:12.3px;line-height:16px;color:#5a5d61;transform:scaleX(0.9260);">10.23.16.176</span>
<span class="t" style="left:267.3px;top:859.7px;font-size:12.3px;line-height:16px;color:#5a5d61;transform:scaleX(0.8772);">INTERCONNECT_ATTACHMENT</span>
<span class="t" style="left:460.2px;top:859.7px;font-size:12.3px;line-height:16px;color:#5a5d61;transform:scaleX(0.9129);">inter-a-hub-ica-vpn-us-east4-a</span>
<span class="t" style="left:640.0px;top:859.7px;font-size:12.3px;line-height:16px;color:#5a5d61;transform:scaleX(0.9358);">10.235.247.136</span>
<span class="t" style="left:748.7px;top:859.7px;font-size:12.3px;line-height:16px;color:#5a5d61;transform:scaleX(0.7991);">GRE</span>
<span class="t" style="left:817.7px;top:859.7px;font-size:12.3px;line-height:16px;color:#5a5d61;transform:scaleX(0.9290);">887.95 MiB</span>
<span class="t" style="left:920.5px;top:862.3px;font-size:11px;line-height:14px;font-weight:700;color:#fff;transform:scaleX(0.9449);">DETAILS</span>
<span class="t" style="left:1035.5px;top:860.2px;font-size:11.5px;line-height:15px;color:#5f6368;transform:scaleX(0.8747);-webkit-text-stroke:0.3px #5f6368;">RUN</span>
<span class="t" style="left:171.5px;top:888.6px;font-size:12.3px;line-height:16px;color:#5a5d61;transform:scaleX(0.9260);">10.23.16.176</span>
<span class="t" style="left:267.3px;top:888.6px;font-size:12.3px;line-height:16px;color:#5a5d61;transform:scaleX(0.8772);">INTERCONNECT_ATTACHMENT</span>
<span class="t" style="left:460.2px;top:888.6px;font-size:12.3px;line-height:16px;color:#5a5d61;transform:scaleX(0.9129);">inter-a-hub-ica-vpn-us-east4-a</span>
<span class="t" style="left:640.0px;top:888.6px;font-size:12.3px;line-height:16px;color:#5a5d61;transform:scaleX(0.9358);">10.235.247.130</span>
<span class="t" style="left:748.7px;top:888.6px;font-size:12.3px;line-height:16px;color:#5a5d61;transform:scaleX(0.7991);">GRE</span>
<span class="t" style="left:817.7px;top:888.6px;font-size:12.3px;line-height:16px;color:#5a5d61;transform:scaleX(0.9290);">809.03 MiB</span>
<span class="t" style="left:920.5px;top:891.2px;font-size:11px;line-height:14px;font-weight:700;color:#fff;transform:scaleX(0.9449);">DETAILS</span>
<span class="t" style="left:1035.5px;top:889.1px;font-size:11.5px;line-height:15px;color:#5f6368;transform:scaleX(0.8747);-webkit-text-stroke:0.3px #5f6368;">RUN</span>
<span class="t" style="left:171.5px;top:917.6px;font-size:12.3px;line-height:16px;color:#5a5d61;transform:scaleX(0.9260);">10.23.16.176</span>
<span class="t" style="left:267.3px;top:917.6px;font-size:12.3px;line-height:16px;color:#5a5d61;transform:scaleX(0.8772);">INTERCONNECT_ATTACHMENT</span>
<span class="t" style="left:460.2px;top:917.6px;font-size:12.3px;line-height:16px;color:#5a5d61;transform:scaleX(0.9129);">inter-a-hub-ica-vpn-us-east4-a</span>
<span class="t" style="left:640.0px;top:917.6px;font-size:12.3px;line-height:16px;color:#5a5d61;transform:scaleX(0.9358);">10.235.247.143</span>
<span class="t" style="left:748.7px;top:917.6px;font-size:12.3px;line-height:16px;color:#5a5d61;transform:scaleX(0.7991);">GRE</span>
<span class="t" style="left:817.7px;top:917.6px;font-size:12.3px;line-height:16px;color:#5a5d61;transform:scaleX(0.9290);">727.22 MiB</span>
<span class="t" style="left:920.5px;top:920.2px;font-size:11px;line-height:14px;font-weight:700;color:#fff;transform:scaleX(0.9449);">DETAILS</span>
<span class="t" style="left:1035.5px;top:918.1px;font-size:11.5px;line-height:15px;color:#5f6368;transform:scaleX(0.8747);-webkit-text-stroke:0.3px #5f6368;">RUN</span>
<span class="t" style="left:171.5px;top:946.5px;font-size:12.3px;line-height:16px;color:#5a5d61;transform:scaleX(0.9260);">10.23.16.176</span>
<span class="t" style="left:267.3px;top:946.5px;font-size:12.3px;line-height:16px;color:#5a5d61;transform:scaleX(0.8772);">INTERCONNECT_ATTACHMENT</span>
<span class="t" style="left:460.2px;top:946.5px;font-size:12.3px;line-height:16px;color:#5a5d61;transform:scaleX(0.9129);">inter-a-hub-ica-vpn-us-east4-a</span>
<span class="t" style="left:640.0px;top:946.5px;font-size:12.3px;line-height:16px;color:#5a5d61;transform:scaleX(0.9358);">10.235.247.141</span>
<span class="t" style="left:748.7px;top:946.5px;font-size:12.3px;line-height:16px;color:#5a5d61;transform:scaleX(0.7991);">GRE</span>
<span class="t" style="left:817.7px;top:946.5px;font-size:12.3px;line-height:16px;color:#5a5d61;transform:scaleX(0.9290);">643.27 MiB</span>
<span class="t" style="left:920.5px;top:949.1px;font-size:11px;line-height:14px;font-weight:700;color:#fff;transform:scaleX(0.9449);">DETAILS</span>
<span class="t" style="left:1035.5px;top:947.0px;font-size:11.5px;line-height:15px;color:#5f6368;transform:scaleX(0.8747);-webkit-text-stroke:0.3px #5f6368;">RUN</span>
<span class="t" style="left:171.5px;top:975.4px;font-size:12.3px;line-height:16px;color:#5a5d61;transform:scaleX(0.9260);">10.23.16.176</span>
<span class="t" style="left:267.3px;top:975.4px;font-size:12.3px;line-height:16px;color:#5a5d61;transform:scaleX(0.8772);">INTERCONNECT_ATTACHMENT</span>
<span class="t" style="left:460.2px;top:975.4px;font-size:12.3px;line-height:16px;color:#5a5d61;transform:scaleX(0.9129);">inter-a-hub-ica-vpn-us-east4-a</span>
<span class="t" style="left:640.0px;top:975.4px;font-size:12.3px;line-height:16px;color:#5a5d61;transform:scaleX(0.9358);">10.235.247.138</span>
<span class="t" style="left:748.7px;top:975.4px;font-size:12.3px;line-height:16px;color:#5a5d61;transform:scaleX(0.7991);">GRE</span>
<span class="t" style="left:817.7px;top:975.4px;font-size:12.3px;line-height:16px;color:#5a5d61;transform:scaleX(0.9290);">640.55 MiB</span>
<span class="t" style="left:920.5px;top:978.1px;font-size:11px;line-height:14px;font-weight:700;color:#fff;transform:scaleX(0.9449);">DETAILS</span>
<span class="t" style="left:1035.5px;top:975.9px;font-size:11.5px;line-height:15px;color:#5f6368;transform:scaleX(0.8747);-webkit-text-stroke:0.3px #5f6368;">RUN</span>
<span class="t" style="left:171.5px;top:1004.4px;font-size:12.3px;line-height:16px;color:#5a5d61;transform:scaleX(0.9260);">10.23.16.176</span>
<span class="t" style="left:267.3px;top:1004.4px;font-size:12.3px;line-height:16px;color:#5a5d61;transform:scaleX(0.8772);">INTERCONNECT_ATTACHMENT</span>
<span class="t" style="left:460.2px;top:1004.4px;font-size:12.3px;line-height:16px;color:#5a5d61;transform:scaleX(0.9129);">inter-a-hub-ica-vpn-us-east4-a</span>
<span class="t" style="left:640.0px;top:1004.4px;font-size:12.3px;line-height:16px;color:#5a5d61;transform:scaleX(0.9358);">10.235.247.129</span>
<span class="t" style="left:748.7px;top:1004.4px;font-size:12.3px;line-height:16px;color:#5a5d61;transform:scaleX(0.7991);">GRE</span>
<span class="t" style="left:817.7px;top:1004.4px;font-size:12.3px;line-height:16px;color:#5a5d61;transform:scaleX(0.9290);">577.36 MiB</span>
<span class="t" style="left:920.5px;top:1007.0px;font-size:11px;line-height:14px;font-weight:700;color:#fff;transform:scaleX(0.9449);">DETAILS</span>
<span class="t" style="left:1035.5px;top:1004.9px;font-size:11.5px;line-height:15px;color:#5f6368;transform:scaleX(0.8747);-webkit-text-stroke:0.3px #5f6368;">RUN</span>
<span class="t" style="left:171.5px;top:1033.3px;font-size:12.3px;line-height:16px;color:#5a5d61;transform:scaleX(0.9260);">10.23.16.176</span>
<span class="t" style="left:267.3px;top:1033.3px;font-size:12.3px;line-height:16px;color:#5a5d61;transform:scaleX(0.8772);">INTERCONNECT_ATTACHMENT</span>
<span class="t" style="left:460.2px;top:1033.3px;font-size:12.3px;line-height:16px;color:#5a5d61;transform:scaleX(0.9129);">inter-a-hub-ica-vpn-us-east4-a</span>
<span class="t" style="left:640.0px;top:1033.3px;font-size:12.3px;line-height:16px;color:#5a5d61;transform:scaleX(0.9358);">10.235.247.137</span>
<span class="t" style="left:748.7px;top:1033.3px;font-size:12.3px;line-height:16px;color:#5a5d61;transform:scaleX(0.7991);">GRE</span>
<span class="t" style="left:817.7px;top:1033.3px;font-size:12.3px;line-height:16px;color:#5a5d61;transform:scaleX(0.9290);">417.76 MiB</span>
<span class="t" style="left:920.5px;top:1036.0px;font-size:11px;line-height:14px;font-weight:700;color:#fff;transform:scaleX(0.9449);">DETAILS</span>
<span class="t" style="left:1035.5px;top:1033.8px;font-size:11.5px;line-height:15px;color:#5f6368;transform:scaleX(0.8747);-webkit-text-stroke:0.3px #5f6368;">RUN</span>
<span class="t" style="left:58.0px;top:8.8px;font-size:19.5px;line-height:25px;color:#4285f4;transform:scaleX(0.8737);"><span style="color:#4285f4">G</span><span style="color:#ea4335">o</span><span style="color:#fbbc05">o</span><span style="color:#4285f4">g</span><span style="color:#34a853">l</span><span style="color:#ea4335">e</span></span>
<span class="t" style="left:118.0px;top:8.8px;font-size:19.5px;line-height:25px;color:#5f6368;transform:scaleX(0.8498);">Cloud</span>
<div style="left:1257.5px;top:570px;width:317.5px;height:246px;background:#fff;box-shadow:0 0 3px rgba(0,0,0,.18);"></div>
<div style="left:1268px;top:609px;width:8px;height:1px;background:#bdbdbd;"></div>
<svg style="left:1267.5px;top:624.5px;" width="21" height="10" viewBox="0 0 21 10"><path d="M0 5.6h14" stroke="#d0d0d0" stroke-width="2.4"/><circle cx="15.8" cy="5" r="3.4" fill="#c8c8c8"/></svg>
<svg style="left:1267.3px;top:643.7px;" width="22.9" height="9.9" viewBox="0 0 22.9 9.9"><path d="M0.8 8.940000000000001V4.8H16.900000000000002V8.940000000000001" fill="#a9c0f0" stroke="#3b63d0" stroke-width="1.6"/><rect x="13.500000000000002" y="1.6999999999999997" width="5.8" height="5.8" fill="#3b63d0"/></svg>
<svg style="left:1267.3px;top:681.0px;" width="22.9" height="9.9" viewBox="0 0 22.9 9.9"><path d="M0.8 8.940000000000001V4.8H16.900000000000002V8.940000000000001" fill="#a8d8d0" stroke="#3f8f8a" stroke-width="1.6"/><path d="M16.400000000000002 1.0999999999999996L19.900000000000002 4.6L16.400000000000002 8.1L12.900000000000002 4.6z" fill="#3f8f8a"/></svg>
<svg style="left:1267.3px;top:718.0px;" width="22.9" height="9.9" viewBox="0 0 22.9 9.9"><path d="M0.8 8.940000000000001V4.8H16.900000000000002V8.940000000000001" fill="#f0a0cc" stroke="#b83a78" stroke-width="1.6"/><path d="M12.900000000000002 2.0999999999999996H19.900000000000002L16.400000000000002 8.1z" fill="#b83a78"/></svg>
<svg style="left:1267.3px;top:755.7px;" width="22.9" height="9.9" viewBox="0 0 22.9 9.9"><path d="M0.8 8.940000000000001V4.8H16.900000000000002V8.940000000000001" fill="#a8d8b0" stroke="#4a9c5c" stroke-width="1.6"/><path d="M12.900000000000002 7.1H19.900000000000002L16.400000000000002 1.0999999999999996z" fill="#4a9c5c"/></svg>
<span class="t" style="left:1267.7px;top:579.7px;font-size:11px;line-height:14px;color:#5f6368;transform:scaleX(0.9277);">Oct 17, 2024, 2:09:00 PM</span>
<span class="t" style="left:1292.7px;top:621.8px;font-size:11.5px;line-height:15px;font-weight:700;color:#3c4043;transform:scaleX(0.8634);">Rest of traffic</span>
<span class="t" style="left:1514.3px;top:621.8px;font-size:11.5px;line-height:15px;font-weight:700;color:#3c4043;transform:scaleX(0.9310);">4.92MiB/s</span>
<span class="t" style="left:1292.7px;top:641.5px;font-size:11.5px;line-height:15px;color:#757575;transform:scaleX(0.8848);">10.23.16.176|INTERCONNECT_ATTACHME</span>
<span class="t" style="left:1292.7px;top:659.2px;font-size:11.5px;line-height:15px;color:#757575;transform:scaleX(0.8853);">NT|inter-a-hub-ica-vpn-us-east4-a → 10.2…</span>
<span class="t" style="left:1559.1px;top:641.5px;font-size:11.5px;line-height:15px;color:#757575;transform:scaleX(0.7180);">0</span>
<span class="t" style="left:1292.7px;top:678.8px;font-size:11.5px;line-height:15px;color:#757575;transform:scaleX(0.8848);">10.23.16.176|INTERCONNECT_ATTACHME</span>
<span class="t" style="left:1292.7px;top:696.5px;font-size:11.5px;line-height:15px;color:#757575;transform:scaleX(0.8853);">NT|inter-a-hub-ica-vpn-us-east4-a → 10.2…</span>
<span class="t" style="left:1515.4px;top:678.8px;font-size:11.5px;line-height:15px;color:#757575;transform:scaleX(0.9445);">0.37MiB/s</span>
<span class="t" style="left:1292.7px;top:715.8px;font-size:11.5px;line-height:15px;color:#757575;transform:scaleX(0.8848);">10.23.16.176|INTERCONNECT_ATTACHME</span>
<span class="t" style="left:1292.7px;top:733.5px;font-size:11.5px;line-height:15px;color:#757575;transform:scaleX(0.8853);">NT|inter-a-hub-ica-vpn-us-east4-a → 10.2…</span>
<span class="t" style="left:1521.1px;top:715.8px;font-size:11.5px;line-height:15px;color:#757575;transform:scaleX(0.9520);">0.4MiB/s</span>
<span class="t" style="left:1292.7px;top:753.5px;font-size:11.5px;line-height:15px;color:#757575;transform:scaleX(0.8848);">10.23.16.176|INTERCONNECT_ATTACHME</span>
<span class="t" style="left:1292.7px;top:771.2px;font-size:11.5px;line-height:15px;color:#757575;transform:scaleX(0.8853);">NT|inter-a-hub-ica-vpn-us-east4-a → 10.2…</span>
<span class="t" style="left:1515.4px;top:753.5px;font-size:11.5px;line-height:15px;color:#757575;transform:scaleX(0.9445);">0.17MiB/s</span>
<span class="t" style="left:1267.7px;top:790.8px;font-size:11.5px;line-height:15px;color:#757575;transform:scaleX(0.9233);">1 below</span>
</div></body></html>
